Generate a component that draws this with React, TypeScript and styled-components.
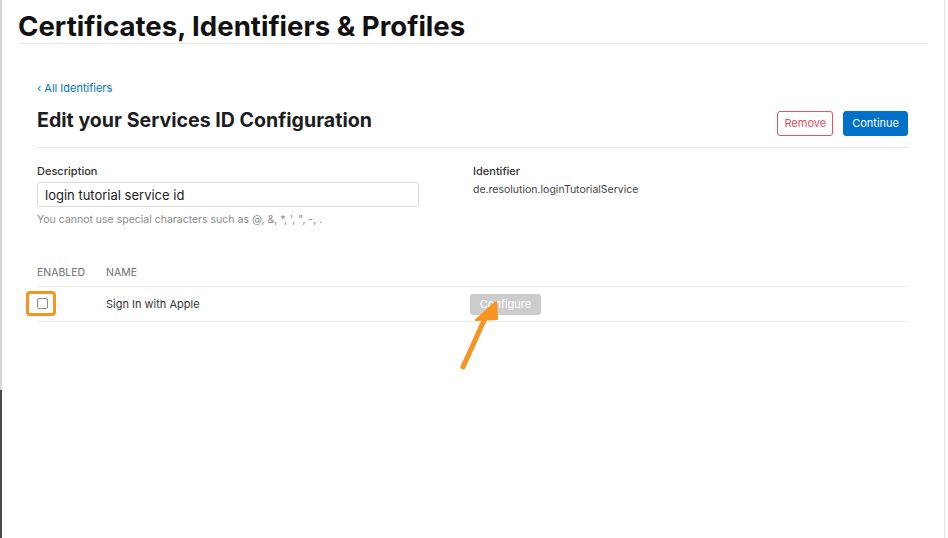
import React from "react";
import styled, { createGlobalStyle } from "styled-components";

const Global = createGlobalStyle`
  html, body { margin: 0; padding: 0; background: #fff; }
  body { font-family: Inter, "Helvetica Neue", "Liberation Sans", Arial, sans-serif; color: #1d1d1f; }
  * { box-sizing: border-box; }
`;

const Frame = styled.div`
  position: relative;
  width: 948px;
  height: 538px;
  display: flex;
  overflow: hidden;
  background: #fff;
`;

const LeftEdge = styled.div`
  width: 2px;
  flex: none;
  background: linear-gradient(to bottom, #d6d6d6 0, #d6d6d6 390px, #4a4a4a 390px);
`;

const Page = styled.div`
  flex: 1;
  display: flex;
  flex-direction: column;
  padding: 10px 0 0 16px;
`;

const RightEdge = styled.div`
  width: 4px;
  flex: none;
  border-left: 1px solid #e6e6e6;
  background: #fbfbfb;
`;

const TopTitle = styled.h1`
  margin: 0;
  font-size: 27.6px;
  font-weight: 700;
  letter-spacing: 0;
  line-height: 32px;
  color: #111;
  padding-bottom: 1px;
  border-bottom: 1px solid #e8e8e8;
  width: 910px;
`;

const Content = styled.div`
  width: 871px;
  margin-left: 19px;
  padding-top: 37px;
  display: flex;
  flex-direction: column;
`;

const BackLink = styled.a`
  font-size: 11px;
  color: #0070c9;
  text-decoration: none;
  line-height: 14px;
`;

const HeaderRow = styled.div`
  display: flex;
  align-items: center;
  justify-content: space-between;
  height: 44px;
  margin-top: 4px;
  border-bottom: 1px solid #e3e3e3;
  padding-bottom: 4px;
  box-sizing: content-box;
`;

const PageTitle = styled.h2`
  margin: 0;
  font-size: 19.6px;
  font-weight: 700;
  color: #1d1d1f;
  letter-spacing: 0;
  margin-top: -2px;
`;

const Actions = styled.div`
  display: flex;
  gap: 10px;
  margin-top: 4px;
`;

const Button = styled.button<{ $variant: "primary" | "danger" }>`
  height: 25px;
  font-family: inherit;
  font-size: 11px;
  border-radius: 3px;
  cursor: pointer;
  ${(p) =>
    p.$variant === "primary"
      ? `padding:0 8px;background:#0070c9;border:1px solid #0070c9;color:#fff;`
      : `padding:0 6px;background:#fff;border:1px solid #e3505f;color:#e3505f;`}
`;

const Fields = styled.div`
  display: grid;
  grid-template-columns: 436px 1fr;
  margin-top: 16px;
`;

const Field = styled.div`
  display: flex;
  flex-direction: column;
`;

const Label = styled.div`
  font-size: 11px;
  font-weight: 500;
  color: #333;
  line-height: 14px;
`;

const Input = styled.div`
  margin-top: 4px;
  width: 382px;
  height: 25px;
  border: 1px solid #dcdcdc;
  border-radius: 3px;
  padding: 0 7px;
  display: flex;
  align-items: center;
  font-size: 13px;
  color: #222;
`;

const Help = styled.div`
  margin-top: 6px;
  font-size: 10.5px;
  color: #8a8a8a;
`;

const Value = styled.div`
  margin-top: 5px;
  font-size: 10.5px;
  color: #444;
`;

const Table = styled.div`
  margin-top: 38px;
  display: flex;
  flex-direction: column;
`;

const Row = styled.div<{ $head?: boolean }>`
  display: grid;
  grid-template-columns: 69px 364px 1fr;
  align-items: center;
  height: ${(p) => (p.$head ? "16px" : "34px")};
  border-bottom: 1px solid #ececec;
  font-size: ${(p) => (p.$head ? "10.5px" : "11px")};
  color: ${(p) => (p.$head ? "#6e6e6e" : "#333")};
  text-transform: ${(p) => (p.$head ? "uppercase" : "none")};
  padding-bottom: ${(p) => (p.$head ? "6px" : "0")};
  box-sizing: content-box;
`;

const CheckCell = styled.div`
  position: relative;
  height: 12px;
`;

const Check = styled.div`
  width: 11px;
  height: 11px;
  border: 1px solid #8e8e8e;
  border-radius: 2px;
  background: #fff;
`;

const Highlight = styled.div`
  position: absolute;
  left: -11px;
  top: -7px;
  width: 30px;
  height: 25px;
  border: 3px solid #f7931e;
  border-radius: 4px;
`;

const ConfigureCell = styled.div`
  position: relative;
  height: 21px;
`;

const Configure = styled.button`
  height: 21px;
  width: 71px;
  background: #cccccc;
  border: none;
  border-radius: 3px;
  color: #fff;
  font-family: inherit;
  font-size: 11px;
`;

const Arrow = styled.svg`
  position: absolute;
  left: -20px;
  top: 0px;
  overflow: visible;
`;

export default function App() {
  return (
    <>
      <Global />
      <Frame>
        <LeftEdge />
        <Page>
          <TopTitle>Certificates, Identifiers &amp; Profiles</TopTitle>
          <Content>
            <BackLink>‹ All Identifiers</BackLink>
            <HeaderRow>
              <PageTitle>Edit your Services ID Configuration</PageTitle>
              <Actions>
                <Button $variant="danger">Remove</Button>
                <Button $variant="primary">Continue</Button>
              </Actions>
            </HeaderRow>
            <Fields>
              <Field>
                <Label>Description</Label>
                <Input>login tutorial service id</Input>
                <Help>You cannot use special characters such as @, &amp;, *, ', ", -, .</Help>
              </Field>
              <Field>
                <Label>Identifier</Label>
                <Value>de.resolution.loginTutorialService</Value>
              </Field>
            </Fields>
            <Table>
              <Row $head>
                <span>Enabled</span>
                <span>Name</span>
                <span />
              </Row>
              <Row>
                <CheckCell>
                  <Check />
                  <Highlight />
                </CheckCell>
                <span>Sign In with Apple</span>
                <ConfigureCell>
                  <Configure>Configure</Configure>
                  <Arrow width="60" height="80">
                    <line x1="13" y1="73" x2="36" y2="22" stroke="#f7931e" strokeWidth="5" strokeLinecap="round" />
                    <polygon points="46,8 26,26 47,25" fill="#f7931e" stroke="#f7931e" strokeWidth="2" strokeLinejoin="round" />
                  </Arrow>
                </ConfigureCell>
              </Row>
            </Table>
          </Content>
        </Page>
        <RightEdge />
      </Frame>
    </>
  );
}
